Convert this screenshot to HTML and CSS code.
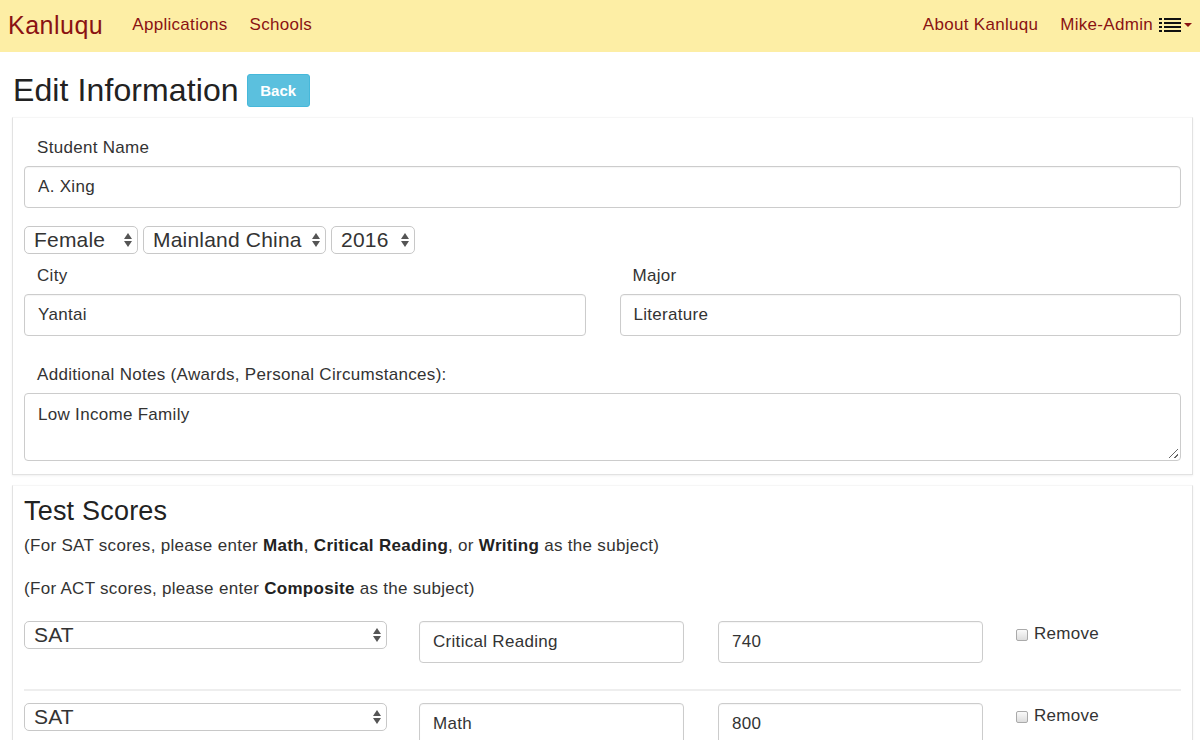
FILE: index.html
```html
<!DOCTYPE html>
<html>
<head>
<meta charset="utf-8">
<link rel="stylesheet" href="styles.css">
</head>
<body>
<nav class="navbar">
  <div class="nav-left">
    <a class="brand">Kanluqu</a>
    <a class="nav-link">Applications</a>
    <a class="nav-link">Schools</a>
  </div>
  <div class="nav-right">
    <a class="nav-link">About Kanluqu</a>
    <a class="nav-link user">Mike-Admin
      <svg class="list-icon" width="22" height="16" viewBox="0 0 22 16">
        <rect x="0" y="1" width="3" height="2" fill="#111"/>
        <rect x="5" y="1" width="17" height="2" fill="#111"/>
        <rect x="0" y="5" width="3" height="2" fill="#111"/>
        <rect x="5" y="5" width="17" height="2" fill="#111"/>
        <rect x="0" y="9" width="3" height="2" fill="#111"/>
        <rect x="5" y="9" width="17" height="2" fill="#111"/>
        <rect x="0" y="13" width="3" height="2" fill="#111"/>
        <rect x="5" y="13" width="17" height="2" fill="#111"/>
      </svg>
      <span class="caret"></span>
    </a>
  </div>
</nav>

<div class="page">
  <div class="title-row">
    <h1>Edit Information</h1>
    <button class="btn-back">Back</button>
  </div>

  <div class="panel">
    <label class="lbl">Student Name</label>
    <input class="field" type="text" value="A. Xing">
    <div class="select-row">
      <div class="sel sel-gender">Female<span class="arrows"></span></div>
      <div class="sel sel-region">Mainland China<span class="arrows"></span></div>
      <div class="sel sel-year">2016<span class="arrows"></span></div>
    </div>
    <div class="two-col">
      <div>
        <label class="lbl">City</label>
        <input class="field" type="text" value="Yantai">
      </div>
      <div>
        <label class="lbl">Major</label>
        <input class="field" type="text" value="Literature">
      </div>
    </div>
    <label class="lbl lbl-notes">Additional Notes (Awards, Personal Circumstances):</label>
    <div class="textarea">Low Income Family<span class="grip"></span></div>
  </div>

  <div class="panel panel-scores">
    <h2>Test Scores</h2>
    <p class="hint">(For SAT scores, please enter <b>Math</b>, <b>Critical Reading</b>, or <b>Writing</b> as the subject)</p>
    <p class="hint hint2">(For ACT scores, please enter <b>Composite</b> as the subject)</p>
    <div class="score-row">
      <div class="sel sel-test">SAT<span class="arrows"></span></div>
      <input class="field" type="text" value="Critical Reading">
      <input class="field" type="text" value="740">
      <label class="remove"><span class="cb"></span>Remove</label>
    </div>
    <div class="divider"></div>
    <div class="score-row">
      <div class="sel sel-test">SAT<span class="arrows"></span></div>
      <input class="field" type="text" value="Math">
      <input class="field" type="text" value="800">
      <label class="remove"><span class="cb"></span>Remove</label>
    </div>
  </div>
</div>
</body>
</html>
```

FILE: styles.css
```css
* { box-sizing: border-box; }
html, body { margin: 0; padding: 0; }
body {
  font-family: "Liberation Sans", Arial, sans-serif;
  color: #333;
  background: #fff;
  font-size: 17px;
  letter-spacing: 0.3px;
  width: 1200px;
  height: 740px;
  overflow: hidden;
}

.navbar {
  height: 52px;
  background: #fdeea5;
  display: flex;
  justify-content: space-between;
  align-items: center;
  padding: 0 8px;
}
.nav-left, .nav-right { display: flex; align-items: center; }
.brand {
  font-size: 25px;
  letter-spacing: 0.5px;
  color: #8a1212;
  margin-right: 29px;
  position: relative;
  top: -1px;
}
.nav-link {
  color: #8a1212;
  font-size: 17px;
  margin-right: 22px;
  display: flex;
  align-items: center;
  position: relative;
  top: -1px;
}
.nav-right .nav-link:last-child { margin-right: 0; }
.nav-right .nav-link:first-child { margin-right: 22px; }
.list-icon { margin-left: 6px; }
.caret {
  width: 0; height: 0;
  border-left: 4px solid transparent;
  border-right: 4px solid transparent;
  border-top: 4px solid #8a1212;
  margin-left: 3px;
}

.page { padding: 0 7px 0 12px; }

.title-row {
  display: flex;
  align-items: center;
  height: 65px;
  padding-top: 12px;
}
h1 {
  font-size: 32px;
  font-weight: 500;
  margin: 0 8px 0 1px;
  color: #222;
  letter-spacing: 0.1px;
}
.btn-back {
  background: #5bc0de;
  border: 1px solid #46b8da;
  color: #fff;
  font-family: "Liberation Sans", Arial, sans-serif;
  font-weight: bold;
  font-size: 15px;
  border-radius: 3px;
  width: 63px;
  height: 33px;
  padding: 0;
}

.panel {
  border: 1px solid #e2e2e2;
  border-top-color: #f6f6f6;
  box-shadow: 0 1px 2px rgba(0,0,0,0.06);
  padding: 18px 11px 13px 11px;
  margin-bottom: 10px;
}

.lbl {
  display: block;
  font-size: 17px;
  padding-left: 13px;
  margin-bottom: 6px;
  line-height: 24px;
}

.field {
  display: block;
  width: 100%;
  height: 42px;
  border: 1px solid #ccc;
  border-radius: 4px;
  padding: 0 13px;
  font-family: "Liberation Sans", Arial, sans-serif;
  font-size: 17px;
  letter-spacing: 0.3px;
  color: #333;
  background: #fff;
  box-shadow: inset 0 1px 1px rgba(0,0,0,0.04);
}

.select-row {
  display: flex;
  gap: 5px;
  margin-top: 18px;
  margin-bottom: 10px;
}
.sel {
  position: relative;
  height: 28px;
  border: 1px solid #c8c8c8;
  border-radius: 5px;
  font-size: 21px;
  letter-spacing: 0.2px;
  line-height: 26px;
  padding-left: 9px;
  color: #333;
  background: #fff;
  white-space: nowrap;
}
.sel-gender { width: 114px; }
.sel-region { width: 183px; }
.sel-year { width: 84px; }
.arrows {
  position: absolute;
  right: 5px;
  top: 6px;
  width: 8px;
  height: 14px;
}
.arrows::before, .arrows::after {
  content: "";
  position: absolute;
  left: 0;
  border-left: 4px solid transparent;
  border-right: 4px solid transparent;
}
.arrows::before { top: 0; border-bottom: 6px solid #555; }
.arrows::after { bottom: 0; border-top: 6px solid #555; }

.two-col {
  display: grid;
  grid-template-columns: 1fr 1fr;
  gap: 34px;
}

.lbl-notes { margin-top: 27px; }

.textarea {
  position: relative;
  height: 68px;
  border: 1px solid #ccc;
  border-radius: 4px;
  padding: 12px 13px;
  font-size: 17px;
  line-height: 18px;
}
.grip {
  position: absolute;
  right: 2px;
  bottom: 2px;
  width: 9px;
  height: 9px;
  background: linear-gradient(135deg, transparent 45%, #666 45%, #666 55%, transparent 55%, transparent 75%, #666 75%, #666 85%, transparent 85%);
}

.panel-scores {
  padding-top: 10px;
  border-bottom: none;
  height: 400px;
}
h2 {
  font-size: 27px;
  font-weight: 500;
  margin: 0 0 9px 0;
  color: #222;
  line-height: 30px;
  letter-spacing: 0.2px;
}
.hint {
  margin: 0;
  font-size: 17px;
  line-height: 22px;
}
.hint2 { margin-top: 21px; }
.hint b { color: #222; }

.score-row {
  display: grid;
  grid-template-columns: 363px 265px 265px 1fr;
  column-gap: 32px;
  align-items: start;
  margin-top: 21px;
}
.score-row .field:nth-child(3) { margin-left: 2px; }
.sel-test { width: 363px; }
.score-row .remove { margin-left: 3px; }
.divider {
  height: 2px;
  background: #eee;
  margin-top: 26px;
}
.score-row + .divider + .score-row { margin-top: 12px; }
.remove {
  display: flex;
  align-items: center;
  font-size: 17px;
  padding-top: 3px;
}
.cb {
  width: 12px;
  height: 12px;
  border: 1px solid #aaa;
  border-radius: 2px;
  background: linear-gradient(#fafafa, #ddd);
  margin-right: 6px;
  margin-top: 2px;
}
```
